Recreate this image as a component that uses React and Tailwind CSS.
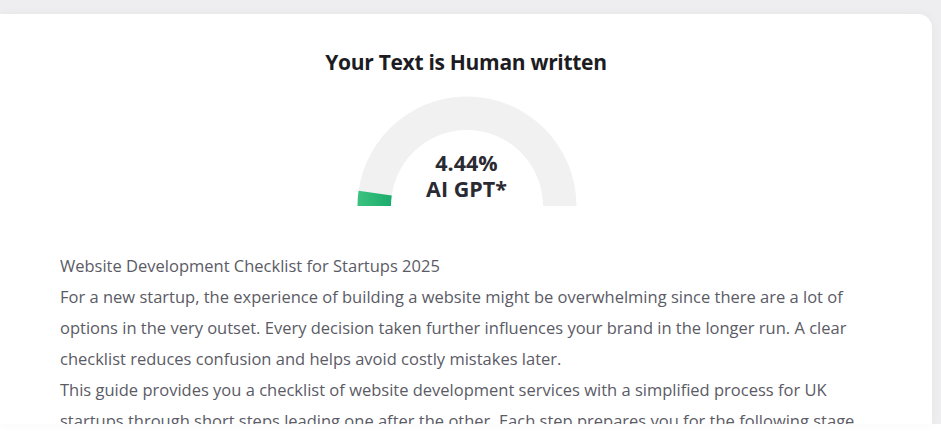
import React from "react";

function Gauge() {
  const cx = 110, cy = 110, R = 109.5, r = 76;
  const pct = 4.44;
  const a = Math.PI * (1 - pct / 100);
  const p = (rad, ang) => [cx + rad * Math.cos(ang), cy - rad * Math.sin(ang)];
  const [x1, y1] = p(R, a);
  const [x2, y2] = p(r, a);
  const track = `M ${cx - R} ${cy} A ${R} ${R} 0 0 1 ${cx + R} ${cy} L ${cx + r} ${cy} A ${r} ${r} 0 0 0 ${cx - r} ${cy} Z`;
  const fill = `M ${cx - R} ${cy} A ${R} ${R} 0 0 1 ${x1} ${y1} L ${x2} ${y2} A ${r} ${r} 0 0 0 ${cx - r} ${cy} Z`;
  return (
    <div className="relative w-[220px] h-[110px]">
      <svg width="220" height="110" viewBox="0 0 220 110" className="absolute left-0 top-0">
        <defs>
          <linearGradient id="g" x1="0" y1="0" x2="1" y2="0">
            <stop offset="0" stopColor="#3cc27f" />
            <stop offset="1" stopColor="#1aab6c" />
          </linearGradient>
        </defs>
        <path d={track} fill="#f1f1f1" />
        <path d={fill} fill="url(#g)" />
      </svg>
      <div className="absolute left-0 right-0 top-[54px] flex flex-col items-center text-[21.5px] font-bold leading-[26px] text-[#2a2a33]">
        <span>4.44%</span>
        <span>AI GPT*</span>
      </div>
    </div>
  );
}

export default function App() {
  return (
    <div
      className="w-[941px] h-[431px] overflow-hidden bg-white flex flex-col"
      style={{ fontFamily: '"Open Sans", "Noto Sans", sans-serif' }}
    >
      <div className="h-[424px] shrink-0 bg-[#eeeef1] pt-[14px]">
        <div className="w-[932px] h-[410px] overflow-hidden bg-white rounded-tr-[14px] shadow-[0_0_12px_rgba(0,0,0,0.04)] flex flex-col items-center">
          <h1 className="mt-[34px] text-[21px] font-bold leading-[28px] text-[#1c1c22] tracking-[-0.3px]">
            Your Text is Human written
          </h1>
          <div className="mt-[20px] ml-[1px]">
            <Gauge />
          </div>
          <div className="self-stretch pl-[60px] pr-[60px] mt-[44px] text-[16.5px] leading-[31px] text-[#5b5b66]">
            <p>Website Development Checklist for Startups 2025</p>
            <p>
              For a new startup, the experience of building a website might be overwhelming since there are a lot of options in the very outset. Every decision taken further influences your brand in the longer run. A clear checklist reduces confusion and helps avoid costly mistakes later.
            </p>
            <p>
              This guide provides you a checklist of website development services with a simplified process for UK startups through short steps leading one after the other. Each step prepares you for the following stage.
            </p>
          </div>
        </div>
      </div>
    </div>
  );
}
